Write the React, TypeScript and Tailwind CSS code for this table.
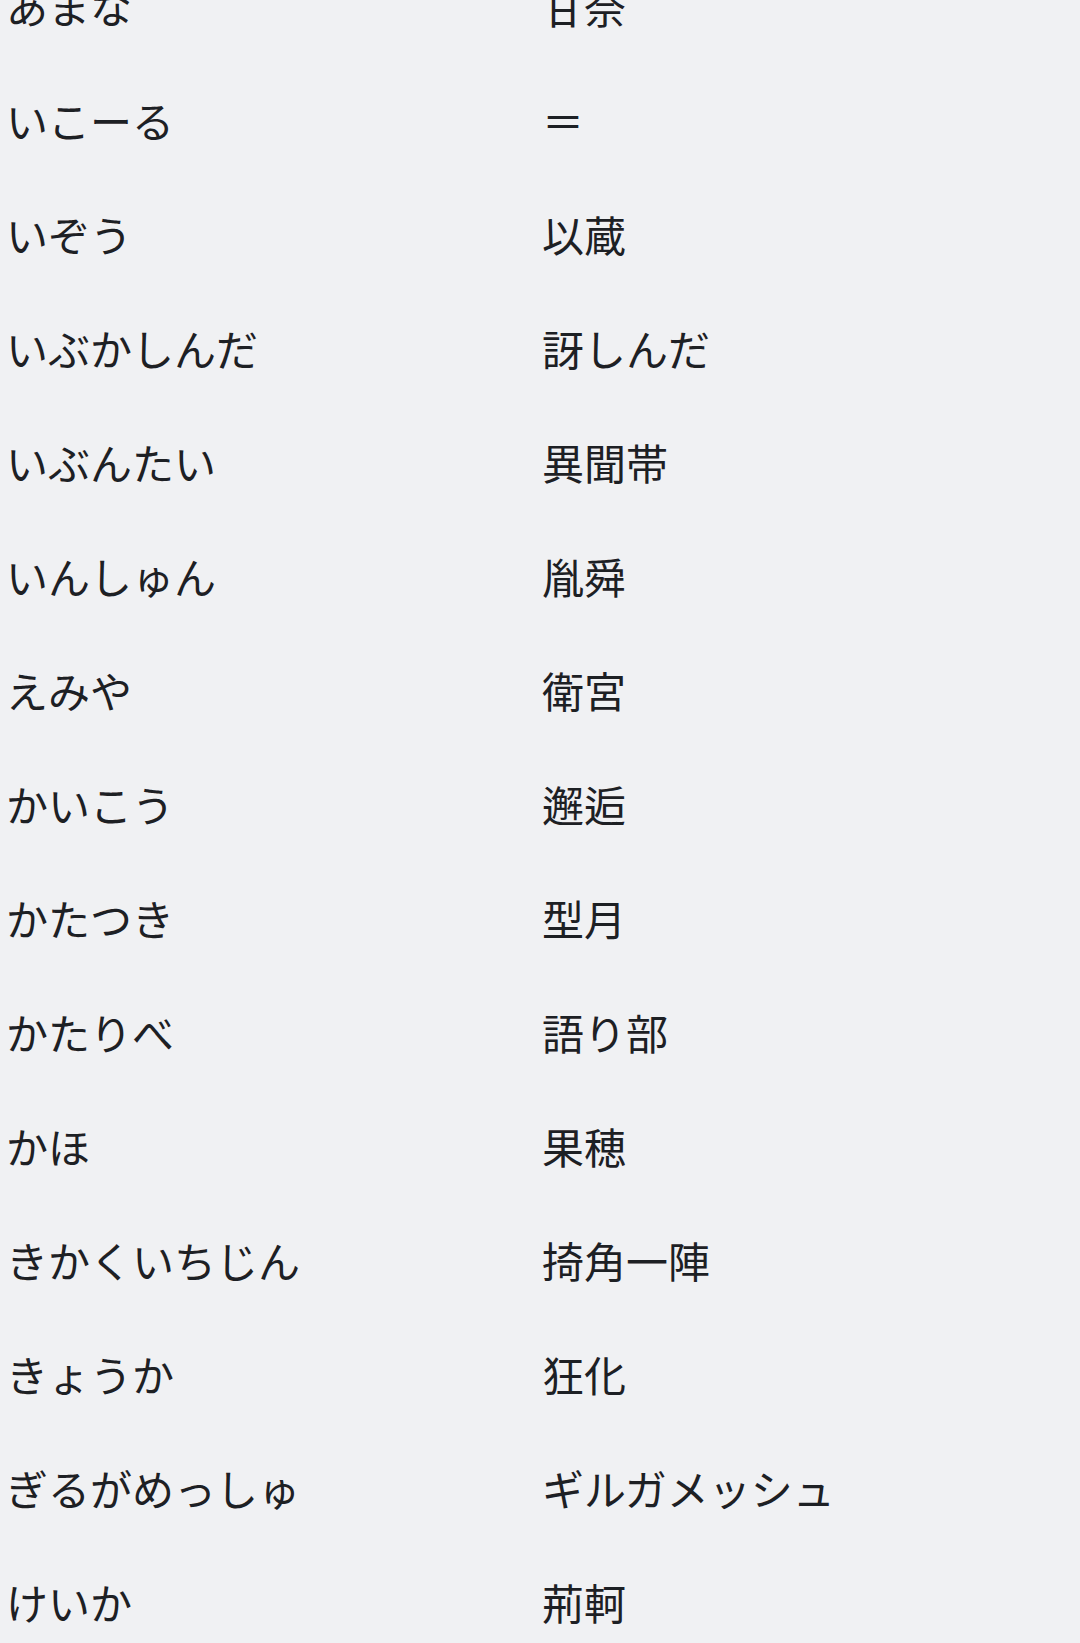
const rows: [string, string][] = [
  ["あまな", "甘奈"],
  ["いこーる", "＝"],
  ["いぞう", "以蔵"],
  ["いぶかしんだ", "訝しんだ"],
  ["いぶんたい", "異聞帯"],
  ["いんしゅん", "胤舜"],
  ["えみや", "衛宮"],
  ["かいこう", "邂逅"],
  ["かたつき", "型月"],
  ["かたりべ", "語り部"],
  ["かほ", "果穂"],
  ["きかくいちじん", "掎角一陣"],
  ["きょうか", "狂化"],
  ["ぎるがめっしゅ", "ギルガメッシュ"],
  ["けいか", "荊軻"],
];

const App = () => {
  return (
    <div
      className="h-[1643px] overflow-hidden bg-[#f0f1f3] text-[42px] leading-none text-[#1d2024]"
      style={{ fontFamily: '"Noto Sans CJK JP", "Noto Sans", sans-serif' }}
    >
      <div className="-mt-[51px]">
        {rows.map(([reading, word]) => (
          <div key={reading} className="grid h-[114px] grid-cols-2 items-center">
            <span className="pl-[6px]">{reading}</span>
            <span className="pl-[2px]">{word}</span>
          </div>
        ))}
      </div>
    </div>
  );
};

export default App;
